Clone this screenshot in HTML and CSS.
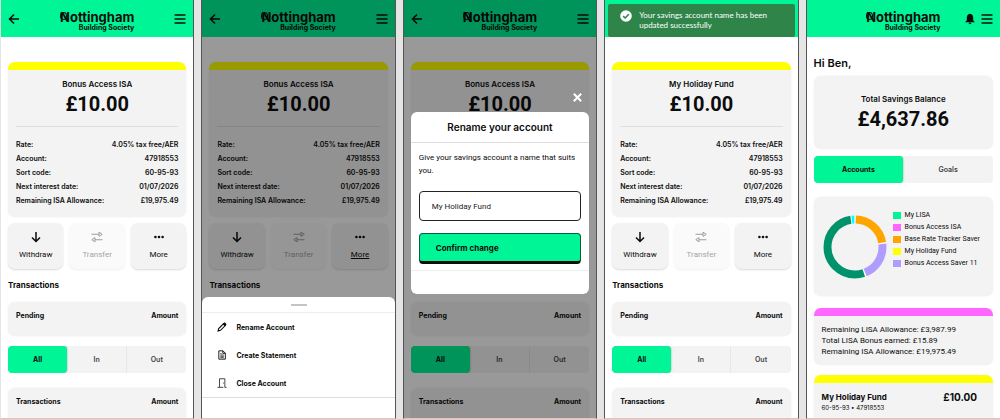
FILE: index.html
```html
<!DOCTYPE html>
<html lang="en">
<head>
    <meta charset="UTF-8">
    <meta name="viewport" content="width=device-width, initial-scale=1.0">
    <title>Nottingham Building Society</title>
    <link rel="stylesheet" href="styles.css">
</head>
<body>

    <!-- Shared icons -->
    <svg class="sprite" aria-hidden="true">
        <symbol id="back" viewBox="0 0 12 12"><path d="M11 6H1.5M6 1.5L1.5 6L6 10.5" fill="none" stroke="currentColor" stroke-width="1.6"/></symbol>
        <symbol id="menu" viewBox="0 0 12 12"><path d="M0.5 2H11.5M0.5 6H11.5M0.5 10H11.5" fill="none" stroke="currentColor" stroke-width="1.5"/></symbol>
        <symbol id="down" viewBox="0 0 12 12"><path d="M6 1V10.5M2 6.5L6 10.5L10 6.5" fill="none" stroke="currentColor" stroke-width="1.5"/></symbol>
        <symbol id="swap" viewBox="0 0 12 12"><path d="M0.5 3.3H8M4 8.7H11.5" stroke="currentColor" stroke-width="1.1"/><path d="M8 1.2L11.2 3.3L8 5.4ZM4 6.6L0.8 8.7L4 10.8Z" fill="none" stroke="currentColor" stroke-width="1"/></symbol>
        <symbol id="dots" viewBox="0 0 12 12"><circle cx="2.4" cy="6" r="1.3"/><circle cx="6" cy="6" r="1.3"/><circle cx="9.6" cy="6" r="1.3"/></symbol>
        <symbol id="bell" viewBox="0 0 12 12"><path d="M6 0.8C3.6 1.2 2.8 3 2.8 5V7.2L1.2 9.2H10.8L9.2 7.2V5C9.2 3 8.4 1.2 6 0.8ZM4.6 9.8C4.8 11.6 7.2 11.6 7.4 9.8Z"/></symbol>
        <symbol id="pencil" viewBox="0 0 12 12"><path d="M1.3 10.7L2 7.8L8 1.8L10.2 4L4.2 10Z" fill="none" stroke="currentColor" stroke-width="1.3"/><path d="M7 2.8L8.6 1C9 0.6 9.6 0.6 10 1L11 2C11.4 2.4 11.4 3 11 3.4L9.2 5ZM1 11L1.6 8.6L3.4 10.4Z"/></symbol>
        <symbol id="document" viewBox="0 0 12 12"><path d="M2.2 1H7.2L10 3.8V11H2.2ZM7 1V4H10" fill="none" stroke="currentColor" stroke-width="1.1"/><path d="M4 6H8.2M4 7.6H8.2M4 9.2H8.2M4 4.4H5.6" stroke="currentColor" stroke-width="0.9"/></symbol>
        <symbol id="door" viewBox="0 0 12 12"><path d="M0.6 11.2H3V0.9H9.4V11.2H11.4M3 11.2H7.6" fill="none" stroke="currentColor" stroke-width="0.9"/><circle cx="7.5" cy="6" r="0.6"/></symbol>
        <symbol id="close" viewBox="0 0 12 12"><path d="M2 2L10 10M10 2L2 10" stroke="currentColor" stroke-width="2.2"/></symbol>
        <symbol id="tick" viewBox="0 0 12 12"><circle cx="6" cy="6" r="5.8" fill="#fff"/><path d="M3.2 6.2L5.2 8L8.8 4.2" fill="none" stroke="#2f8549" stroke-width="1.6"/></symbol>
    </svg>

    <main class="screens">

        <!-- Account details -->
        <section class="phone">
            <header class="topbar">
                <button class="icon-btn" aria-label="Back"><svg><use href="#back"/></svg></button>
                <a class="logo" href="#"><span class="logo-name">Nottingham</span><span class="logo-sub">Building Society</span></a>
                <button class="icon-btn" aria-label="Menu"><svg><use href="#menu"/></svg></button>
            </header>
            <div class="content">
                <article class="card account yellow">
                    <h2>Bonus Access ISA</h2>
                    <p class="amount">£10.00</p>
                    <dl class="details">
                        <div><dt>Rate:</dt><dd>4.05% tax free/AER</dd></div>
                        <div><dt>Account:</dt><dd>47918553</dd></div>
                        <div><dt>Sort code:</dt><dd>60-95-93</dd></div>
                        <div><dt>Next interest date:</dt><dd>01/07/2026</dd></div>
                        <div><dt>Remaining ISA Allowance:</dt><dd>£19,975.49</dd></div>
                    </dl>
                </article>
                <div class="actions">
                    <button><svg><use href="#down"/></svg><span>Withdraw</span></button>
                    <button disabled><svg><use href="#swap"/></svg><span>Transfer</span></button>
                    <button><svg><use href="#dots"/></svg><span>More</span></button>
                </div>
                <h3>Transactions</h3>
                <div class="card list-head"><span>Pending</span><span>Amount</span></div>
                <div class="tabs">
                    <button class="active">All</button>
                    <button>In</button>
                    <button>Out</button>
                </div>
                <div class="card list-head tall"><span>Transactions</span><span>Amount</span></div>
            </div>
        </section>

        <!-- Options menu open -->
        <section class="phone">
            <header class="topbar">
                <button class="icon-btn" aria-label="Back"><svg><use href="#back"/></svg></button>
                <a class="logo" href="#"><span class="logo-name">Nottingham</span><span class="logo-sub">Building Society</span></a>
                <button class="icon-btn" aria-label="Menu"><svg><use href="#menu"/></svg></button>
            </header>
            <div class="content">
                <article class="card account yellow">
                    <h2>Bonus Access ISA</h2>
                    <p class="amount">£10.00</p>
                    <dl class="details">
                        <div><dt>Rate:</dt><dd>4.05% tax free/AER</dd></div>
                        <div><dt>Account:</dt><dd>47918553</dd></div>
                        <div><dt>Sort code:</dt><dd>60-95-93</dd></div>
                        <div><dt>Next interest date:</dt><dd>01/07/2026</dd></div>
                        <div><dt>Remaining ISA Allowance:</dt><dd>£19,975.49</dd></div>
                    </dl>
                </article>
                <div class="actions">
                    <button><svg><use href="#down"/></svg><span>Withdraw</span></button>
                    <button disabled><svg><use href="#swap"/></svg><span>Transfer</span></button>
                    <button class="open"><svg><use href="#dots"/></svg><span>More</span></button>
                </div>
                <h3>Transactions</h3>
            </div>
            <div class="overlay">
                <nav class="sheet">
                    <div class="handle"></div>
                    <ul>
                        <li><button><svg><use href="#pencil"/></svg>Rename Account</button></li>
                        <li><button><svg><use href="#document"/></svg>Create Statement</button></li>
                        <li><button><svg><use href="#door"/></svg>Close Account</button></li>
                    </ul>
                </nav>
            </div>
        </section>

        <!-- Rename dialog -->
        <section class="phone">
            <header class="topbar">
                <button class="icon-btn" aria-label="Back"><svg><use href="#back"/></svg></button>
                <a class="logo" href="#"><span class="logo-name">Nottingham</span><span class="logo-sub">Building Society</span></a>
                <button class="icon-btn" aria-label="Menu"><svg><use href="#menu"/></svg></button>
            </header>
            <div class="content">
                <article class="card account yellow">
                    <h2>Bonus Access ISA</h2>
                    <p class="amount">£10.00</p>
                    <dl class="details"></dl>
                </article>
                <div class="actions"></div>
                <h3></h3>
                <div class="card list-head"><span>Pending</span><span>Amount</span></div>
                <div class="tabs">
                    <button class="active">All</button>
                    <button>In</button>
                    <button>Out</button>
                </div>
                <div class="card list-head tall"><span>Transactions</span><span>Amount</span></div>
            </div>
            <div class="overlay dialog-wrap">
                <button class="close" aria-label="Close"><svg><use href="#close"/></svg></button>
                <form class="dialog">
                    <h2>Rename your account</h2>
                    <div class="dialog-body">
                        <label for="accountName">Give your savings account a name that suits you.</label>
                        <input type="text" id="accountName" value="My Holiday Fund">
                        <button type="button">Confirm change</button>
                    </div>
                    <footer></footer>
                </form>
            </div>
        </section>

        <!-- Rename confirmed -->
        <section class="phone">
            <header class="topbar">
                <div class="toast" role="status">
                    <svg><use href="#tick"/></svg>
                    <p>Your savings account name has been updated successfully</p>
                </div>
            </header>
            <div class="content">
                <article class="card account yellow">
                    <h2>My Holiday Fund</h2>
                    <p class="amount">£10.00</p>
                    <dl class="details">
                        <div><dt>Rate:</dt><dd>4.05% tax free/AER</dd></div>
                        <div><dt>Account:</dt><dd>47918553</dd></div>
                        <div><dt>Sort code:</dt><dd>60-95-93</dd></div>
                        <div><dt>Next interest date:</dt><dd>01/07/2026</dd></div>
                        <div><dt>Remaining ISA Allowance:</dt><dd>£19,975.49</dd></div>
                    </dl>
                </article>
                <div class="actions">
                    <button><svg><use href="#down"/></svg><span>Withdraw</span></button>
                    <button disabled><svg><use href="#swap"/></svg><span>Transfer</span></button>
                    <button><svg><use href="#dots"/></svg><span>More</span></button>
                </div>
                <h3>Transactions</h3>
                <div class="card list-head"><span>Pending</span><span>Amount</span></div>
                <div class="tabs">
                    <button class="active">All</button>
                    <button>In</button>
                    <button>Out</button>
                </div>
                <div class="card list-head tall"><span>Transactions</span><span>Amount</span></div>
            </div>
        </section>

        <!-- Home -->
        <section class="phone">
            <header class="topbar">
                <span></span>
                <a class="logo" href="#"><span class="logo-name">Nottingham</span><span class="logo-sub">Building Society</span></a>
                <div class="topbar-end">
                    <button class="icon-btn" aria-label="Notifications"><svg><use href="#bell"/></svg></button>
                    <button class="icon-btn" aria-label="Menu"><svg><use href="#menu"/></svg></button>
                </div>
            </header>
            <div class="content home">
                <h1>Hi Ben,</h1>
                <div class="card balance">
                    <h2>Total Savings Balance</h2>
                    <p class="amount">£4,637.86</p>
                </div>
                <div class="tabs">
                    <button class="active">Accounts</button>
                    <button>Goals</button>
                </div>
                <div class="card chart">
                    <svg class="donut" viewBox="0 0 64 64" role="img" aria-label="Savings by account">
                        <g fill="none" stroke-width="8" transform="rotate(-90 32 32)">
                            <circle cx="32" cy="32" r="27.5" stroke="#fff"/>
                            <circle cx="32" cy="32" r="27.5" pathLength="100" stroke="#ffa500" stroke-dasharray="22 78" stroke-dashoffset="-0.4"/>
                            <circle cx="32" cy="32" r="27.5" pathLength="100" stroke="#b09cff" stroke-dasharray="20.8 79.2" stroke-dashoffset="-23.2"/>
                            <circle cx="32" cy="32" r="27.5" pathLength="100" stroke="#00936b" stroke-dasharray="52.8 47.2" stroke-dashoffset="-44.8"/>
                            <circle cx="32" cy="32" r="27.5" pathLength="100" stroke="#00fbff" stroke-dasharray="1.4 98.6" stroke-dashoffset="-98.2"/>
                        </g>
                    </svg>
                    <ul class="legend">
                        <li class="green">My LISA</li>
                        <li class="pink">Bonus Access ISA</li>
                        <li class="orange">Base Rate Tracker Saver</li>
                        <li class="yellow">My Holiday Fund</li>
                        <li class="purple">Bonus Access Saver 11</li>
                    </ul>
                </div>
                <div class="card allowances pink">
                    <p>Remaining LISA Allowance: £3,987.99</p>
                    <p>Total LISA Bonus earned: £15.89</p>
                    <p>Remaining ISA Allowance: £19,975.49</p>
                </div>
                <div class="card fund yellow">
                    <div>
                        <h2>My Holiday Fund</h2>
                        <p>60-95-93 • 47918553</p>
                    </div>
                    <strong>£10.00</strong>
                </div>
            </div>
        </section>

    </main>

</body>
</html>
```
FILE: styles.css
```css
* {
    box-sizing: border-box;
    margin: 0;
    padding: 0;
}

body {
    background-color: #e5e5e5;
    color: #0c0c0c;
    font-family: Inter, sans-serif;
    font-size: 7px;
}

button {
    border: none;
    background: none;
    color: inherit;
    font: inherit;
    cursor: pointer;
}

svg {
    display: block;
    width: 12px;
    height: 12px;
    fill: currentColor;
}

ul {
    list-style: none;
}

.sprite {
    display: none;
}

.screens {
    display: grid;
    grid-template-columns: repeat(5, 1fr);
    gap: 7px;
    height: 100vh;
}

.phone {
    position: relative;
    min-width: 0;
    background-color: white;
    border: 1px solid #555;
    border-top: none;
    border-bottom-color: #ccc;
    overflow: hidden;
}

.phone:first-child {
    border-left-color: #e5e5e5;
}

.phone:last-child {
    border-right: none;
}

/* Header */
.topbar {
    display: grid;
    grid-template-columns: 1fr auto 1fr;
    align-items: center;
    height: 37px;
    padding: 0 7px;
    background-color: #00f596;
}

.icon-btn:last-child {
    justify-self: end;
}

.icon-btn {
    justify-self: start;
}

.topbar-end {
    display: flex;
    justify-content: flex-end;
    gap: 5px;
}

.logo {
    position: relative;
    display: flex;
    flex-direction: column;
    align-items: flex-end;
    padding-top: 6px;
    color: #0c0c0c;
    font-weight: 700;
    text-decoration: none;
}

.logo-name {
    font-size: 13px;
    line-height: 13px;
}

.logo-sub {
    font-size: 7px;
    line-height: 8px;
}

/* Loop on the N of the logo */
.logo::before {
    content: "";
    position: absolute;
    top: 7px;
    left: 0;
    width: 5px;
    height: 6px;
    border: 1px solid #0c0c0c;
    border-radius: 50%;
}

.content {
    padding: 25px 7px 0;
}

/* Cards */
.card {
    background-color: #f3f3f3;
    border-radius: 7px;
    box-shadow: 0 0 2px rgba(0, 0, 0, 0.08);
}

.card.yellow {
    border-top: 8px solid #ffff00;
}

.card.pink {
    border-top: 8px solid #ff66ff;
}

.account {
    height: 155px;
    padding: 8px;
    text-align: center;
}

.account h2,
.balance h2 {
    font-size: 8px;
    font-weight: 600;
    line-height: 12px;
}

.amount {
    font-family: Roboto, sans-serif;
    font-size: 20px;
    font-weight: 700;
    line-height: 28px;
}

.details {
    margin-top: 8px;
    padding-top: 11px;
    border-top: 1px solid #dedede;
    font-weight: 600;
    line-height: 14px;
}

.details div {
    display: flex;
    justify-content: space-between;
}

.actions {
    display: grid;
    grid-template-columns: repeat(3, 1fr);
    gap: 6px;
    height: 46px;
    margin-top: 6px;
}

.actions button {
    display: flex;
    flex-direction: column;
    align-items: center;
    justify-content: center;
    gap: 6px;
    background-color: #f3f3f3;
    border-radius: 7px;
    box-shadow: 0 1px 2px rgba(0, 0, 0, 0.15);
    font-family: Roboto, sans-serif;
    font-size: 8px;
    line-height: 12px;
}

.actions button:disabled {
    opacity: 0.4;
}

.actions .open span {
    text-decoration: underline;
}

h3 {
    height: 16px;
    margin-top: 8px;
    font-size: 8px;
    font-weight: 700;
    line-height: 16px;
}

.list-head {
    display: flex;
    justify-content: space-between;
    height: 34px;
    margin-top: 9px;
    padding: 8px;
    font-weight: 700;
    line-height: 12px;
}

.list-head.tall {
    height: 48px;
    margin-top: 15px;
}

.tabs {
    display: flex;
    height: 27px;
    margin-top: 10px;
    background-color: #f3f3f3;
    border-radius: 4px;
    overflow: hidden;
}

.tabs button {
    flex: 1;
    color: #444;
    font-weight: 600;
}

.tabs button + button + button {
    border-left: 1px solid #e6e6ec;
}

.tabs .active {
    background-color: #00f596;
    border-radius: 4px;
    box-shadow: 0 0 2px rgba(0, 0, 0, 0.4);
    color: #0c0c0c;
    font-weight: 700;
}

/* Dimmed layer over a screen */
.overlay {
    position: absolute;
    inset: 0;
    display: flex;
    flex-direction: column;
    background-color: rgba(0, 0, 0, 0.4);
}

.sheet {
    height: 121px;
    margin-top: auto;
    background-color: white;
    border-radius: 6px 6px 0 0;
}

.handle {
    width: 16px;
    height: 2px;
    margin: 7px auto 6px;
    background-color: #c4c4c4;
}

.sheet ul {
    border-top: 1px solid #eee;
    border-bottom: 1px solid #ddd;
}

.sheet button {
    display: flex;
    align-items: center;
    gap: 9px;
    width: 100%;
    height: 28px;
    padding: 0 15px;
    font-weight: 700;
}

.sheet svg {
    width: 10px;
    height: 10px;
}

.dialog-wrap {
    padding: 92px 7px 0;
}

.close {
    align-self: flex-end;
    margin: 0 6px 9px;
    color: white;
}

.close svg {
    width: 11px;
    height: 11px;
}

.dialog {
    background-color: white;
    border-radius: 6px;
}

.dialog h2 {
    border-bottom: 1px solid #ddd;
    font-size: 10px;
    font-weight: 600;
    line-height: 30px;
    text-align: center;
}

.dialog-body {
    padding: 8px 8px 6px;
    border-bottom: 1px solid #eee;
    font-family: Roboto, sans-serif;
    font-size: 8px;
}

.dialog label {
    display: block;
    line-height: 13px;
}

.dialog input {
    display: block;
    width: 100%;
    height: 30px;
    margin: 14px 0 12px;
    padding: 0 12px;
    border: 1px solid #222;
    border-radius: 4px;
    color: #222;
    font-family: Roboto, sans-serif;
    font-size: 8px;
}

.dialog-body button {
    display: block;
    width: 100%;
    height: 31px;
    padding: 0 16px;
    background-color: #00f596;
    border: 1px solid #0c5c3d;
    border-bottom: 3px solid #0c0c0c;
    border-radius: 4px;
    font-family: Inter, sans-serif;
    font-size: 8px;
    font-weight: 700;
    text-align: left;
}

.dialog footer {
    height: 23px;
}

.toast {
    grid-column: 1 / -1;
    display: flex;
    gap: 7px;
    height: 33px;
    margin: 4px -4px 0;
    padding: 6px 12px;
    background-color: #2f8549;
    border-radius: 2px;
    color: white;
    font-family: Lato, sans-serif;
    font-size: 8px;
    line-height: 10px;
}

.toast svg {
    flex: none;
}

/* Home screen */
.home {
    padding-top: 18px;
}

.home h1 {
    font-size: 11px;
    font-weight: 600;
    line-height: 16px;
}

.balance {
    height: 73px;
    margin-top: 5px;
    padding: 17px 0;
    text-align: center;
}

.home .tabs {
    margin-top: 7px;
}

.chart {
    display: flex;
    gap: 6px;
    height: 99px;
    margin-top: 14px;
    padding: 12px 9px;
}

.donut {
    flex: none;
    width: 64px;
    height: 64px;
    margin-top: 6px;
}

.legend {
    font-family: Roboto, sans-serif;
    font-size: 7px;
    line-height: 12px;
    white-space: nowrap;
}

.legend li {
    display: flex;
    align-items: center;
    gap: 4px;
}

.legend li::before {
    content: "";
    width: 8px;
    height: 7px;
}

.legend .green::before {
    background-color: #00f596;
}

.legend .pink::before {
    background-color: #ff66ff;
}

.legend .orange::before {
    background-color: #ffa500;
}

.legend .yellow::before {
    background-color: #ffff00;
}

.legend .purple::before {
    background-color: #b09cff;
}

.allowances {
    margin-top: 12px;
    padding: 8px;
    font-family: Roboto, sans-serif;
    font-size: 8px;
    line-height: 11px;
}

.fund {
    display: flex;
    justify-content: space-between;
    height: 60px;
    margin-top: 10px;
    padding: 8px 16px 8px 8px;
}

.fund h2 {
    font-size: 8px;
    font-weight: 700;
    line-height: 12px;
}

.fund p {
    font-size: 6px;
    line-height: 10px;
}

.fund strong {
    font-size: 10px;
    line-height: 12px;
}
```
